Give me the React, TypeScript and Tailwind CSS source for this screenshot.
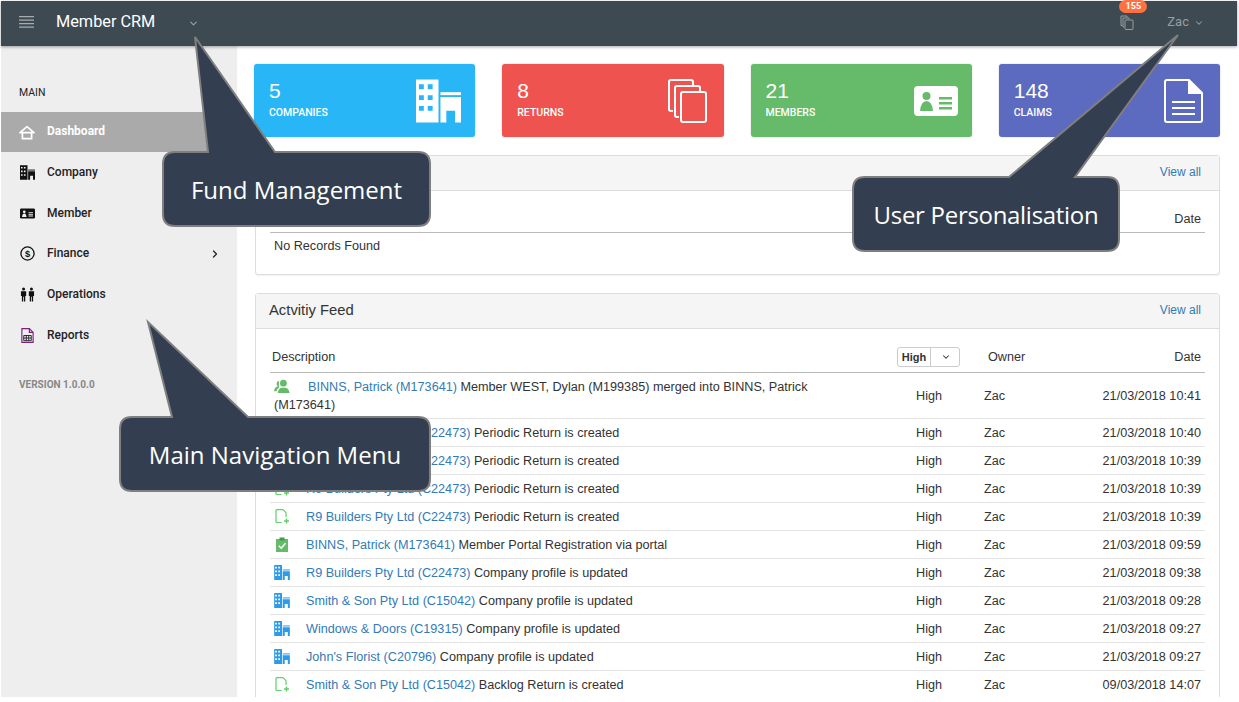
import { ChevronDown, ChevronRight } from 'lucide-react'

type IconProps = { className?: string }

function BuildingIcon({ className }: IconProps) {
  return (
    <svg viewBox="0 0 46 44" className={className} fill="currentColor">
      <path
        fillRule="evenodd"
        d="M0 0h23v44H0z M3 5v5h5V5z M12 5v5h5V5z M3 16v5h5v-5z M12 16v5h5v-5z M3 27v5h5v-5z M12 27v5h5v-5z"
      />
      <path d="M25 13h21v3H25z" />
      <path fillRule="evenodd" d="M25 18h21v26h-6V32h-9v12h-6z" />
    </svg>
  )
}

function HomeIcon({ className }: IconProps) {
  return (
    <svg viewBox="0 0 16 14" className={className} fill="none" stroke="currentColor" strokeWidth="1.700">
      <path d="M1 7.2 8 1.2l7 6H1.6z" strokeLinejoin="round" />
      <path d="M3.4 7.5v5.6h9.2V7.5" />
    </svg>
  )
}

function IdCardIcon({ className }: IconProps) {
  return (
    <svg viewBox="0 0 44 30" className={className}>
      <rect width="44" height="30" rx="4" fill="currentColor" />
      <circle cx="12.5" cy="10" r="4" fill="var(--hole)" />
      <path d="M6 25q1-10 6.500-10T19 25z" fill="var(--hole)" />
      <path d="M25 11h13v2.500H25zM25 16h13v2.500H25zM25 21h13v2.500H25z" fill="var(--hole)" />
    </svg>
  )
}

function StackIcon({ className }: IconProps) {
  return (
    <svg viewBox="0 0 39 44" className={className} fill="none" stroke="currentColor" strokeWidth="2">
      <path d="M5 32H3a2 2 0 0 1-2-2V3a2 2 0 0 1 2-2h20a2 2 0 0 1 2 2v3" />
      <path d="M11 38H9a2 2 0 0 1-2-2V9a2 2 0 0 1 2-2h21a2 2 0 0 1 2 2v3" />
      <rect x="13" y="13" width="25" height="30" rx="2" />
    </svg>
  )
}

function DocIcon({ className }: IconProps) {
  return (
    <svg viewBox="0 0 39 44" className={className} fill="none" stroke="currentColor" strokeWidth="2">
      <path d="M3 1h22l13 13v27a2 2 0 0 1-2 2H3a2 2 0 0 1-2-2V3a2 2 0 0 1 2-2z" />
      <path d="M25 1v13h13" fill="currentColor" />
      <path d="M8 23h23M8 29h23M8 35h23" />
    </svg>
  )
}

function FinanceIcon({ className }: IconProps) {
  return (
    <svg viewBox="0 0 16 16" className={className}>
      <circle cx="8" cy="8" r="7" fill="none" stroke="currentColor" strokeWidth="1.400" />
      <text x="8" y="11.400" textAnchor="middle" fontSize="10" fontWeight="700" fontFamily="'Liberation Sans', sans-serif" fill="currentColor">
        $
      </text>
    </svg>
  )
}

function PeopleIcon({ className }: IconProps) {
  return (
    <svg viewBox="0 0 16 16" className={className} fill="currentColor">
      <circle cx="3.800" cy="2.200" r="1.600" />
      <path d="M1 4.500h5.600v5H5.600V15.500H4.200v-5h-.8v5H2V9.500H1z" />
      <circle cx="12.200" cy="2.200" r="1.600" />
      <path d="M9.400 4.500H15v5h-1V15.500h-1.400v-5h-.8v5h-1.400V9.500h-1z" />
    </svg>
  )
}

function ReportIcon({ className }: IconProps) {
  return (
    <svg viewBox="0 0 14 16" className={className} fill="none" stroke="#7b1f7b" strokeWidth="1.200">
      <path d="M1 .7h8l4 4v10.600H1z" />
      <path d="M9 .7v4h4" />
      <path d="M3 8h8v5.500H3zM3 10.700h8M5.700 8v5.500M8.300 8v5.500" stroke="#222" strokeWidth="1" />
    </svg>
  )
}

function MergeIcon({ className }: IconProps) {
  return (
    <svg viewBox="0 0 17 15" className={className} fill="currentColor">
      <circle cx="10" cy="4" r="3.600" />
      <path d="M4 14.500q.5-5 4-5.700h4q4 .7 4.500 5.700z" />
      <path d="M5.200 1.500a3.300 3.300 0 0 0-1.200 5.800C1.500 8 .4 10 0 12.500h2.600q.6-2.500 2.600-3.800z" />
    </svg>
  )
}

function ClipboardIcon({ className }: IconProps) {
  return (
    <svg viewBox="0 0 14 15" className={className}>
      <path d="M1 2h12v13H1z" fill="currentColor" />
      <path d="M4.500 3.500V.5h5v3z" fill="#3f9e47" />
      <path d="M3.800 8.800 6.200 11.200 10.500 6.300" fill="none" stroke="#fff" strokeWidth="1.500" />
    </svg>
  )
}

function NewDocIcon({ className }: IconProps) {
  return (
    <svg viewBox="0 0 15 15" className={className} fill="none" stroke="currentColor" strokeWidth="1.200">
      <path d="M7 13.500H2.500a1 1 0 0 1-1-1V1.700a1 1 0 0 1 1-1H8.500L11.500 3.700V8" />
      <path d="M12 9.500v5M9.500 12h5" strokeWidth="1.500" />
    </svg>
  )
}

type NavItem = { label: string; Icon: (p: IconProps) => React.ReactNode; tone: string; arrow?: boolean }

const navItems: NavItem[] = [
  { label: 'Company', Icon: BuildingIcon, tone: 'text-[#111]' },
  { label: 'Member', Icon: IdCardIcon, tone: 'text-[#111] [--hole:#eee]' },
  { label: 'Finance', Icon: FinanceIcon, tone: 'text-[#111]', arrow: true },
  { label: 'Operations', Icon: PeopleIcon, tone: 'text-[#111]' },
  { label: 'Reports', Icon: ReportIcon, tone: 'text-[#111]' },
]

function Sidebar() {
  return (
    <aside className="flex w-[236px] shrink-0 flex-col bg-[#eeeeee] pt-[40px] font-['Roboto',sans-serif]">
      <div className="mb-[12px] h-[14px] pl-[18px] text-[10.500px] leading-[14px] text-[#222]">MAIN</div>
      <div className="flex h-[40px] items-center bg-[#aaaaaa] pl-[18px] text-[12px] font-bold text-white">
        <HomeIcon className="mr-[12px] h-[15px] w-[16px]" />
        <span className="-mt-[3px]">Dashboard</span>
      </div>
      {navItems.map(({ label, Icon, tone, arrow }) => (
        <div key={label} className="flex h-[40.800px] items-center pl-[18px] text-[12px] font-medium text-[#222]">
          <span className={`mr-[12px] flex w-[16px] justify-center ${tone}`}>
            <Icon className="h-[15px] w-[15px]" />
          </span>
          <span className="-mt-[1px]">{label}</span>
          {arrow && <ChevronRight className="ml-auto mr-[16px] h-[12px] w-[12px]" strokeWidth={2.500} />}
        </div>
      ))}
      <div className="mt-[22px] pl-[18px] text-[10px] font-bold leading-[14px] text-[#888]">VERSION 1.0.0.0</div>
    </aside>
  )
}

function Header() {
  return (
    <header className="relative z-10 flex h-[45px] shrink-0 items-center bg-[#3e4a52] pb-[3px] pl-[18px] pr-[33px] font-['Roboto',sans-serif] shadow-[0_1px_3px_rgba(0,0,0,0.35)]">
      <svg viewBox="0 0 15 14" className="h-[14px] w-[15px] text-[#a5acb0]" fill="currentColor">
        <path d="M0 1h15v1.300H0zM0 4.500h15v1.300H0zM0 8h15v1.300H0zM0 11.500h15v1.300H0z" />
      </svg>
      <span className="ml-[22px] text-[16.300px] text-white">Member CRM</span>
      <ChevronDown className="ml-[33px] mt-[2px] h-[11px] w-[11px] text-[#98a0a5]" strokeWidth={2.500} />
      <div className="relative ml-auto mr-[33px] mt-[1px] text-[#969da1]">
        <svg viewBox="0 0 14 15" className="h-[15px] w-[14px]" fill="none" stroke="currentColor">
          <path d="M2.500 10.500H1V1h6v1.500" />
          <path d="M4 12H3V3h6v1" />
          <rect x="5" y="5" width="8" height="9.500" rx="0.800" />
        </svg>
        <span className="absolute -top-[15px] -left-[1px] flex h-[13px] w-[28px] items-center justify-center rounded-full bg-[#ff7043] text-[9px] font-bold text-white">
          155
        </span>
      </div>
      <span className="text-[13px] text-[#969da1]">Zac</span>
      <ChevronDown className="ml-[5px] mt-[1px] h-[10px] w-[10px] text-[#969da1]" strokeWidth={2.500} />
    </header>
  )
}

function StatCard({ value, label, bg, children }: { value: string; label: string; bg: string; children: React.ReactNode }) {
  return (
    <div className={`flex h-[73px] items-center justify-between rounded-[3px] pl-[15px] pr-[14px] text-white shadow-[0_0_2px_rgba(0,0,0,0.2)] ${bg}`}>
      <div className="pb-[5px]">
        <div className="font-['Liberation_Sans',sans-serif] text-[21px] leading-[28px]">{value}</div>
        <div className="mt-[1px] font-['Roboto',sans-serif] text-[10.500px] font-medium leading-[13px]">{label}</div>
      </div>
      {children}
    </div>
  )
}

function Panel({ title, children }: { title?: string; children: React.ReactNode }) {
  return (
    <section className="rounded-[3px] border border-[#dddddd] bg-white shadow-[0_1px_1px_rgba(0,0,0,0.05)]">
      <div className="flex h-[35px] items-center justify-between border-b border-[#dddddd] bg-[#f5f5f5] pb-[2px] pl-[13px] pr-[18px]">
        <span className="text-[14.800px] text-[#333]">{title}</span>
        <a className="text-[12px] text-[#337ab7]">View all</a>
      </div>
      {children}
    </section>
  )
}

type Kind = 'merge' | 'doc' | 'check' | 'company'

type Row = { kind: Kind; link: string; text: string; date: string }

const rows: Row[] = [
  { kind: 'merge', link: 'BINNS, Patrick (M173641)', text: ' Member WEST, Dylan (M199385) merged into BINNS, Patrick (M173641)', date: '21/03/2018 10:41' },
  { kind: 'doc', link: 'R9 Builders Pty Ltd (C22473)', text: ' Periodic Return is created', date: '21/03/2018 10:40' },
  { kind: 'doc', link: 'R9 Builders Pty Ltd (C22473)', text: ' Periodic Return is created', date: '21/03/2018 10:39' },
  { kind: 'doc', link: 'R9 Builders Pty Ltd (C22473)', text: ' Periodic Return is created', date: '21/03/2018 10:39' },
  { kind: 'doc', link: 'R9 Builders Pty Ltd (C22473)', text: ' Periodic Return is created', date: '21/03/2018 10:39' },
  { kind: 'check', link: 'BINNS, Patrick (M173641)', text: ' Member Portal Registration via portal', date: '21/03/2018 09:59' },
  { kind: 'company', link: 'R9 Builders Pty Ltd (C22473)', text: ' Company profile is updated', date: '21/03/2018 09:38' },
  { kind: 'company', link: 'Smith & Son Pty Ltd (C15042)', text: ' Company profile is updated', date: '21/03/2018 09:28' },
  { kind: 'company', link: 'Windows & Doors (C19315)', text: ' Company profile is updated', date: '21/03/2018 09:27' },
  { kind: 'company', link: "John's Florist (C20796)", text: ' Company profile is updated', date: '21/03/2018 09:27' },
  { kind: 'doc', link: 'Smith & Son Pty Ltd (C15042)', text: ' Backlog Return is created', date: '09/03/2018 14:07' },
]

function RowIcon({ kind }: { kind: Kind }) {
  const base = 'mr-[16px] inline-block h-[15px] w-[16px] align-[-3px]'
  if (kind === 'merge') return <MergeIcon className={`${base} mr-[18px] text-[#66bb6a]`} />
  if (kind === 'doc') return <NewDocIcon className={`${base} text-[#5fd068]`} />
  if (kind === 'check') return <ClipboardIcon className={`${base} text-[#66bb6a]`} />
  return <BuildingIcon className={`${base} text-[#2e9be6]`} />
}

function ActivityTable() {
  return (
    <table className="w-full table-fixed border-collapse text-[12.650px] leading-[18px] text-[#333]">
      <thead>
        <tr className="h-[30px] border-b border-[#bbbbbb]">
          <th className="pl-[2px] pt-[1px] text-left font-normal">Description</th>
          <th className="w-[78px] text-left font-normal">
            <span className="inline-flex h-[20px] w-[63px] items-center rounded-[3px] border border-[#cccccc] text-[11px] font-bold">
              <span className="w-[33px] border-r border-[#cccccc] text-center leading-[18px]">High</span>
              <ChevronDown className="ml-[10px] h-[10px] w-[10px]" strokeWidth={2.500} />
            </span>
          </th>
          <th className="w-[85px] pl-[13px] pt-[1px] text-left font-normal">Owner</th>
          <th className="w-[145px] pr-[4px] pt-[1px] text-right font-normal">Date</th>
        </tr>
      </thead>
      <tbody>
        {rows.map((row, i) => (
          <tr key={i} className={`border-b border-[#e4e4e4] ${i === 0 ? 'h-[46px]' : 'h-[28px]'}`}>
            <td className="pl-[4px] pr-[30px] pt-[1px]">
              <RowIcon kind={row.kind} />
              <a className="text-[#337ab7]">{row.link}</a>
              {row.text}
            </td>
            <td className="pl-[19px] pt-[1px]">High</td>
            <td className="pl-[9px] pt-[1px]">Zac</td>
            <td className="pr-[4px] pt-[1px] text-right">{row.date}</td>
          </tr>
        ))}
      </tbody>
    </table>
  )
}

function Callouts() {
  return (
    <>
      <svg className="pointer-events-none absolute inset-0 z-20 h-full w-full" fill="#333f50" stroke="#7f7f7f" strokeWidth="2">
        <path d="M175 152H208L195 37 275 152H418Q430 152 430 164V214Q430 226 418 226H175Q163 226 163 214V164Q163 152 175 152Z" />
        <path d="M132 417H172L148 322 248 417H418Q430 417 430 429V479Q430 491 418 491H132Q120 491 120 479V429Q120 417 132 417Z" />
        <path d="M865 177H1009L1178 35 1075 177H1107Q1119 177 1119 189V239Q1119 251 1107 251H865Q853 251 853 239V189Q853 177 865 177Z" />
      </svg>
      <div className="absolute left-[163px] top-[152px] z-30 flex h-[74px] w-[267px] items-center justify-center pt-[2px] font-['Open_Sans',sans-serif] text-[24px] text-white">
        Fund Management
      </div>
      <div className="absolute left-[120px] top-[417px] z-30 flex h-[74px] w-[310px] items-center justify-center pt-[2px] font-['Open_Sans',sans-serif] text-[24px] text-white">
        Main Navigation Menu
      </div>
      <div className="absolute left-[853px] top-[177px] z-30 flex h-[74px] w-[266px] items-center justify-center pt-[2px] font-['Open_Sans',sans-serif] text-[24px] tracking-[-0.3px] text-white">
        User Personalisation
      </div>
    </>
  )
}

export default function App() {
  return (
    <div className="relative h-[702px] w-[1239px] overflow-hidden bg-white pl-[1px] pr-[2px] pt-[1px] pb-[5px] font-['Liberation_Sans',sans-serif]">
      <div className="flex h-full flex-col">
        <Header />
        <div className="flex min-h-0 flex-1 overflow-hidden">
          <Sidebar />
          <main className="min-w-0 flex-1 overflow-hidden pl-[17px] pr-[17px] pt-[18px]">
            <div className="mb-[18px] grid grid-cols-4 gap-[27px]">
              <StatCard value="5" label="COMPANIES" bg="bg-[#29b6f6]">
                <BuildingIcon className="h-[44px] w-[45px]" />
              </StatCard>
              <StatCard value="8" label="RETURNS" bg="bg-[#ef5350]">
                <StackIcon className="mr-[3px] h-[44px] w-[39px]" />
              </StatCard>
              <StatCard value="21" label="MEMBERS" bg="bg-[#66bb6a]">
                <IdCardIcon className="h-[30px] w-[44px] [--hole:#66bb6a]" />
              </StatCard>
              <StatCard value="148" label="CLAIMS" bg="bg-[#5c6bc0]">
                <DocIcon className="mr-[3px] h-[44px] w-[39px]" />
              </StatCard>
            </div>
            <div className="ml-[1px] flex flex-col gap-[18px]">
              <Panel>
                <div className="px-[14px]">
                  <div className="flex h-[42px] items-end justify-end border-b border-[#bbbbbb] pb-[3px] pr-[4px] text-[12.650px] text-[#333]">
                    Date
                  </div>
                  <div className="flex h-[41px] items-start pl-[4px] pt-[4px] text-[12.650px] text-[#333]">No Records Found</div>
                </div>
              </Panel>
              <Panel title="Actvitiy Feed">
                <div className="px-[14px] pt-[13px]">
                  <ActivityTable />
                </div>
              </Panel>
            </div>
          </main>
        </div>
      </div>
      <Callouts />
    </div>
  )
}
